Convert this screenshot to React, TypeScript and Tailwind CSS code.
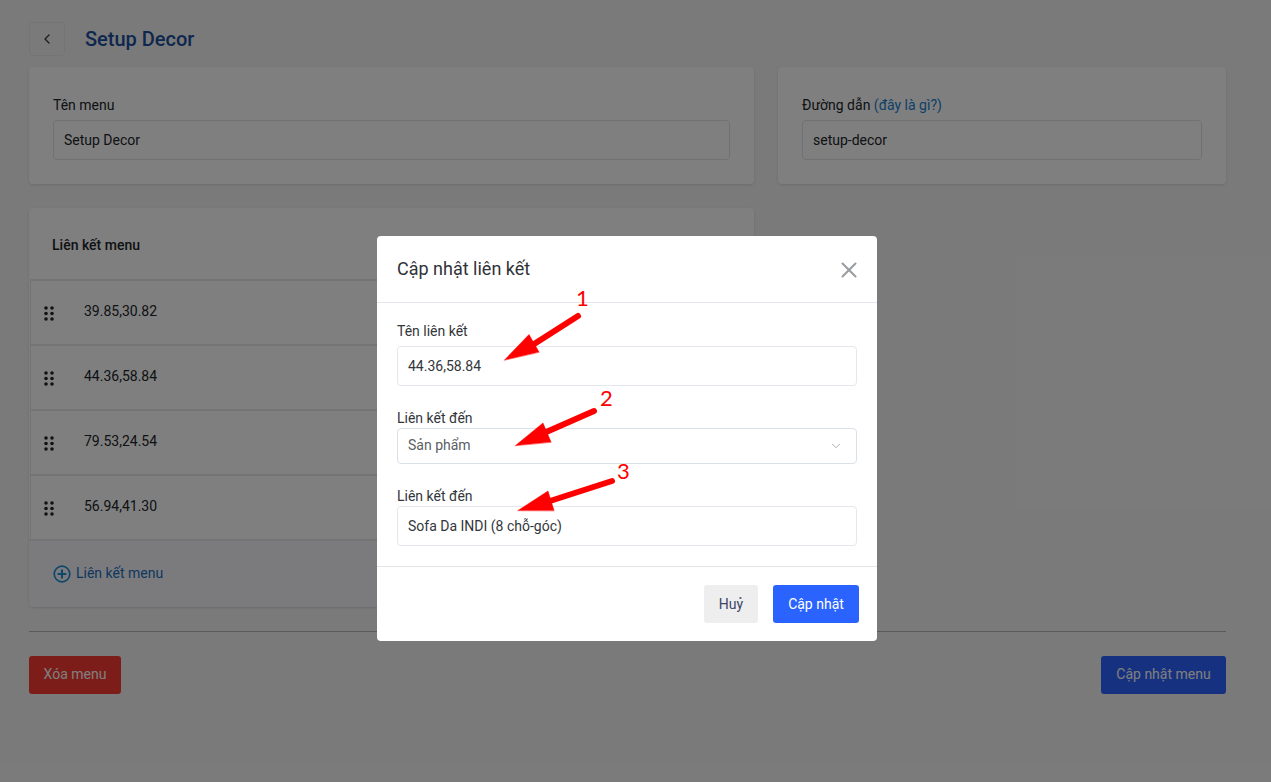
import React from 'react';
import { ChevronLeft, ChevronDown, X } from 'lucide-react';

const links = ['39.85,30.82', '44.36,58.84', '79.53,24.54', '56.94,41.30'];

const DragHandle = () => (
  <svg width="10" height="15" viewBox="0 0 10 15" className="mt-[4px] text-[#212529] fill-current">
    <circle cx="2" cy="2" r="1.8" />
    <circle cx="8" cy="2" r="1.8" />
    <circle cx="2" cy="7.5" r="1.8" />
    <circle cx="8" cy="7.5" r="1.8" />
    <circle cx="2" cy="13" r="1.8" />
    <circle cx="8" cy="13" r="1.8" />
  </svg>
);

const PlusCircle = () => (
  <svg width="18" height="18" viewBox="0 0 18 18" fill="none" stroke="#1a8fd8" strokeWidth="1.7" className="mt-[2px]">
    <circle cx="9" cy="9" r="7.8" />
    <path d="M9 4.6v8.8M4.6 9h8.8" strokeWidth="2" />
  </svg>
);

const Annotations = () => (
  <>
    <svg width="1271" height="782" viewBox="0 0 1271 782" className="absolute left-0 top-0">
      <g fill="#ff0000" stroke="#ff0000" strokeLinecap="round" strokeLinejoin="round">
        <path d="M578 316L531 346" strokeWidth="6" />
        <path d="M504.5 360L529 334.5L539 352Z" strokeWidth="0.5" />
        <path d="M594 411L544 433" strokeWidth="6" />
        <path d="M515.5 445.5L543 423L551 442Z" strokeWidth="0.5" />
        <path d="M612 481L550 501" strokeWidth="6" />
        <path d="M518 510.5L548 491L554 510.5Z" strokeWidth="0.5" />
      </g>
    </svg>
    <span className="absolute left-[576px] top-[285px] font-['Lato',sans-serif] text-[22px] leading-[26px] text-[#ff0000]">1</span>
    <span className="absolute left-[600px] top-[385px] font-['Lato',sans-serif] text-[22px] leading-[26px] text-[#ff0000]">2</span>
    <span className="absolute left-[617px] top-[458px] font-['Lato',sans-serif] text-[22px] leading-[26px] text-[#ff0000]">3</span>
  </>
);

const Modal = () => (
  <div className="absolute left-[377px] top-[236px] w-[500px] h-[405px] rounded-[4px] bg-white text-[14px] text-[#212529]">
    <div className="flex h-[67px] items-center justify-between border-b border-[#e3e6ec] pl-5 pr-[15px]">
      <h2 className="text-[18px] leading-[24px] text-[#2f3237]">Cập nhật liên kết</h2>
      <X size={26} strokeWidth={1.9} className="mt-[2px] text-[#9a9da1]" />
    </div>
    <div className="px-5 pt-[18px]">
      <div className="text-[14px] leading-[20px] text-[#33363a] mb-[5px]">Tên liên kết</div>
      <div className="flex h-[40px] items-center rounded-[4px] border border-[#e4e8ee] px-[10px] text-[#33363a]">44.36,58.84</div>
      <div className="text-[14px] leading-[20px] text-[#33363a] mt-[22px]">Liên kết đến</div>
      <div className="flex h-[36px] items-center justify-between rounded-[4px] border border-[#d9e0e8] pl-[10px] pr-[13px] text-[#5a5e63]">
        <span className="pb-[2px]">Sản phẩm</span>
        <ChevronDown size={14} strokeWidth={1.5} className="text-[#9aa2ad]" />
      </div>
      <div className="text-[14px] leading-[20px] text-[#33363a] mt-[22px]">Liên kết đến</div>
      <div className="flex h-[40px] items-center rounded-[4px] border border-[#e4e8ee] px-[10px] text-[#33363a]">Sofa Da INDI (8 chỗ-góc)</div>
    </div>
    <div className="mt-[20px] flex h-[75px] items-start justify-end gap-[15px] border-t border-[#e3e6e8] pr-[18px] pt-[18px]">
      <button className="h-[38px] w-[54px] rounded-[3px] bg-[#eeeeee] text-[#3b4468]">Huỷ</button>
      <button className="h-[38px] w-[86px] rounded-[3px] bg-[#2b63ff] text-white">Cập nhật</button>
    </div>
  </div>
);

export default function App() {
  return (
    <div className="relative h-[782px] w-[1271px] overflow-hidden bg-[#f5f5f5] font-['Roboto',sans-serif] text-[14px] text-[#212529]">
      <div className="pl-[29px] pr-[45px] pt-[22px]">
        <div className="flex h-[34px] items-center">
          <button className="flex h-[34px] w-[36px] items-center justify-center rounded-[4px] border border-[#e8e8e8]">
            <ChevronLeft size={16} strokeWidth={1.8} className="text-[#333333]" />
          </button>
          <h1 className="ml-[20px] text-[20px] font-medium leading-[34px] text-[#1c4f9c]">Setup Decor</h1>
        </div>

        <div className="mt-[11px] flex gap-[24px]">
          <div className="h-[117px] w-[725px] rounded-[4px] bg-white px-[24px] pt-[28px] shadow-[0_1px_3px_rgba(0,0,0,0.12)]">
            <div className="leading-[20px] mb-[5px]">Tên menu</div>
            <div className="flex h-[40px] items-center rounded-[4px] border border-[#dfe3e8] px-[10px]">Setup Decor</div>
          </div>
          <div className="h-[117px] w-[448px] rounded-[4px] bg-white px-[24px] pt-[28px] shadow-[0_1px_3px_rgba(0,0,0,0.12)]">
            <div className="leading-[20px] mb-[5px]">
              Đường dẫn <span className="text-[#1a7fd0]">(đây là gì?)</span>
            </div>
            <div className="flex h-[40px] items-center rounded-[4px] border border-[#dfe3e8] px-[10px]">setup-decor</div>
          </div>
        </div>

        <div className="mt-[24px] h-[399px] w-[725px] overflow-hidden rounded-[4px] bg-white shadow-[0_1px_3px_rgba(0,0,0,0.12)]">
          <div className="flex h-[71px] items-center px-[23px] pt-[3px] font-medium">Liên kết menu</div>
          {links.map((link) => (
            <div key={link} className="ml-[1px] flex h-[65px] items-center border-t-2 border-l border-[#e8e8e8] pl-[13px] pb-[3px]">
              <DragHandle />
              <span className="ml-[30px]">{link}</span>
            </div>
          ))}
          <div className="flex h-[68px] items-center gap-[5px] border-t-2 border-[#e8e8e8] bg-[#f7f7fa] pb-[2px] pl-[24px]">
            <PlusCircle />
            <span className="text-[#1a6fc0]">Liên kết menu</span>
          </div>
        </div>

        <div className="mt-[24px] border-t border-[#b5b5b5] pt-[24px] flex justify-between">
          <button className="h-[38px] w-[92px] rounded-[3px] bg-[#f93b32] pb-[2px] text-white">Xóa menu</button>
          <button className="h-[38px] w-[125px] rounded-[3px] bg-[#2b63ff] pb-[2px] text-white">Cập nhật menu</button>
        </div>
      </div>

      {/* backdrop */}
      <div className="absolute inset-0 bg-black/50" />
      <Modal />
      <Annotations />
    </div>
  );
}
